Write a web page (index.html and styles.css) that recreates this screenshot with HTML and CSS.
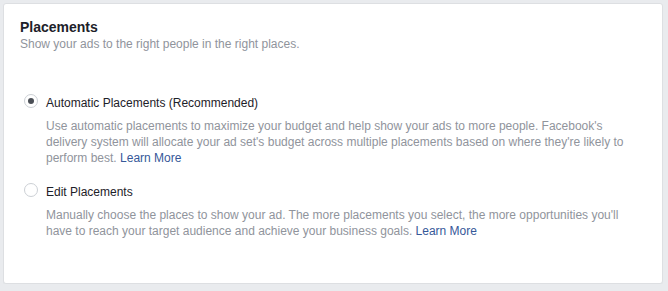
FILE: index.html
```html
<!DOCTYPE html>
<html lang="en">
    <head>
        <meta charset="UTF-8">
        <title>Placements</title>
        <link rel="stylesheet" href="styles.css">
    </head>
    <body>
        <div class="card">
            <h2>Placements</h2>
            <p class="subtitle">Show your ads to the right people in the right places.</p>

            <div class="options">
                <!-- Automatic -->
                <div class="option">
                    <span class="radio checked"></span>
                    <div class="option-body">
                        <div class="option-label">Automatic Placements (Recommended)</div>
                        <p class="option-desc">Use automatic placements to maximize your budget and help show your ads to more people. Facebook's delivery system will allocate your ad set's budget across multiple placements based on where they're likely to perform best. <a href="#">Learn More</a></p>
                    </div>
                </div>

                <!-- Manual -->
                <div class="option">
                    <span class="radio"></span>
                    <div class="option-body">
                        <div class="option-label">Edit Placements</div>
                        <p class="option-desc">Manually choose the places to show your ad. The more placements you select, the more opportunities you'll have to reach your target audience and achieve your business goals. <a href="#">Learn More</a></p>
                    </div>
                </div>
            </div>
        </div>
    </body>
</html>
```

FILE: styles.css
```css
body {
    font-family: 'Liberation Sans', Arial, Helvetica, sans-serif;
    background: #e9ebee;
    margin: 0;
    padding: 3px 5px 0 3px;
    color: #1d2129;
}
.card {
    background: #fff;
    border: 1px solid #dddfe2;
    border-radius: 3px;
    padding: 15px 16px 44px 16px;
    box-shadow: 0 1px 0 #e3e5e8;
}
h2 {
    margin: 0;
    font-size: 14px;
    line-height: 17px;
    font-weight: bold;
    color: #1d2129;
}
.subtitle {
    margin: 0;
    font-size: 12px;
    line-height: 16px;
    color: #90949c;
}
.options {
    margin-top: 43px;
    padding-left: 4px;
}
.option {
    display: flex;
    align-items: flex-start;
    margin-bottom: 18px;
}
.option:last-child {
    margin-bottom: 0;
}
.radio {
    flex: none;
    width: 14px;
    height: 14px;
    margin-top: -1px;
    margin-right: 8px;
    border: 1px solid #ccd0d5;
    border-radius: 50%;
    box-sizing: border-box;
    display: flex;
    align-items: center;
    justify-content: center;
    background: #fff;
}
.radio.checked::after {
    content: '';
    width: 6px;
    height: 6px;
    border-radius: 50%;
    background: #4b4f56;
}
.option-label {
    font-size: 12px;
    line-height: 16px;
    color: #1d2129;
}
.option-desc {
    margin: 7px 0 0;
    max-width: 590px;
    font-size: 12px;
    line-height: 16px;
    color: #90949c;
}
.option-desc a {
    color: #365899;
    text-decoration: none;
}
```
